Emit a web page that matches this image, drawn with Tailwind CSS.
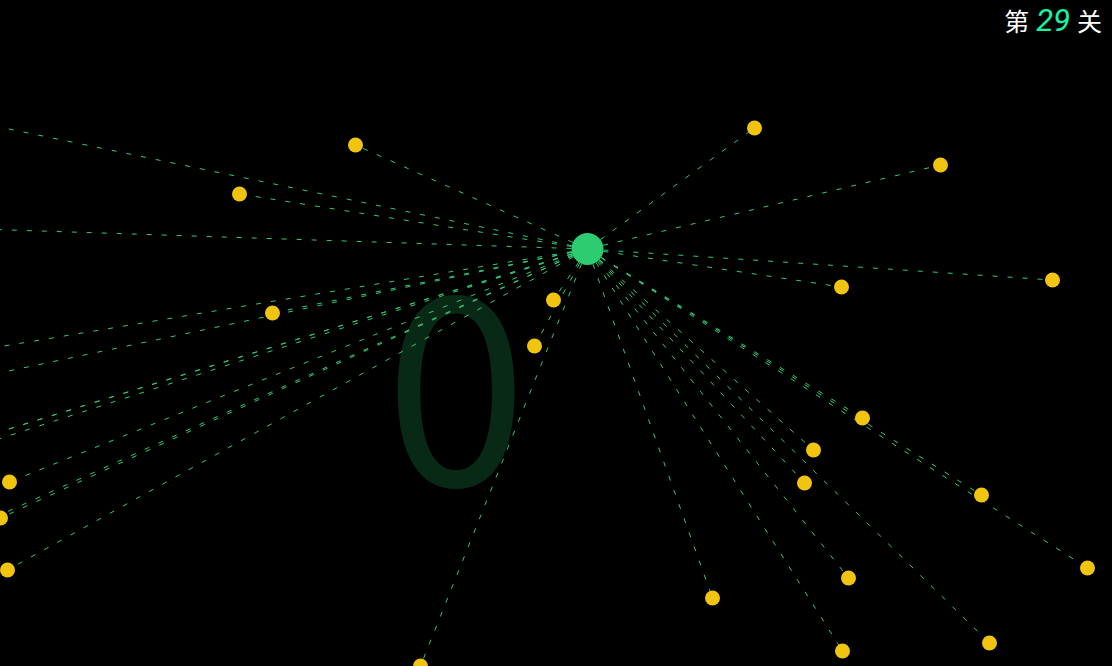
<!DOCTYPE html>
<html lang="zh-CN">
<head>
<meta charset="utf-8">
<meta name="viewport" content="width=device-width, initial-scale=1">
<title>第 29 关</title>
<script src="https://cdn.jsdelivr.net/npm/@tailwindcss/browser@4"></script>
</head>
<body class="bg-black">
<main class="relative h-screen overflow-hidden bg-black font-['Liberation_Sans','Noto_Sans_CJK_SC',sans-serif] text-white">
  <svg class="absolute inset-0 h-full w-full" role="img" aria-label="游戏画面">
    <text x="456" y="486" text-anchor="middle" class="fill-[#2ecc71]/20 font-['Noto_Sans_CJK_SC',sans-serif] text-[256px]">0</text>
    <g id="lines" class="stroke-[#2ecc71]" stroke-width="1" stroke-dasharray="5 10" stroke-dashoffset="-1"></g>
    <g id="dots" class="fill-[#f1c40f]"></g>
    <circle cx="587.5" cy="249" r="16" class="fill-[#2ecc71]"/>
  </svg>
  <header class="relative flex justify-end px-2.5">
    <h1 class="text-[25px] leading-[44px]">第 <em class="font-['Roboto',sans-serif] text-[31px] leading-none text-[#12f7a5]">29</em> 关</h1>
  </header>
</main>
<script>
  const center = [587.5, 249];
  const balls = [
    [-20, 123], [-20, 229], [-20, 350], [-20, 377], [-20, 438], [-20, 438], [-20, 445], [-20, 524],
    [355.5, 145], [239.5, 194], [272.5, 313], [9.5, 482], [0.5, 518], [7.5, 570],
    [553.5, 300], [534.5, 346], [420.5, 666], [754.5, 128], [940.5, 165], [841.5, 287],
    [1052.5, 280], [862.5, 418], [981.5, 495], [1087.5, 568], [813.5, 450], [804.5, 483],
    [848.5, 578], [989.5, 643], [842.5, 651], [712.5, 598]
  ];
  const ns = "http://www.w3.org/2000/svg";
  function add(parent, tag, attrs) {
    const el = document.createElementNS(ns, tag);
    for (const k in attrs) el.setAttribute(k, attrs[k]);
    document.getElementById(parent).appendChild(el);
  }
  for (const [x, y] of balls) {
    add("lines", "line", { x1: center[0], y1: center[1], x2: x, y2: y });
    add("dots", "circle", { cx: x, cy: y, r: 7.5 });
  }
</script>
</body>
</html>
